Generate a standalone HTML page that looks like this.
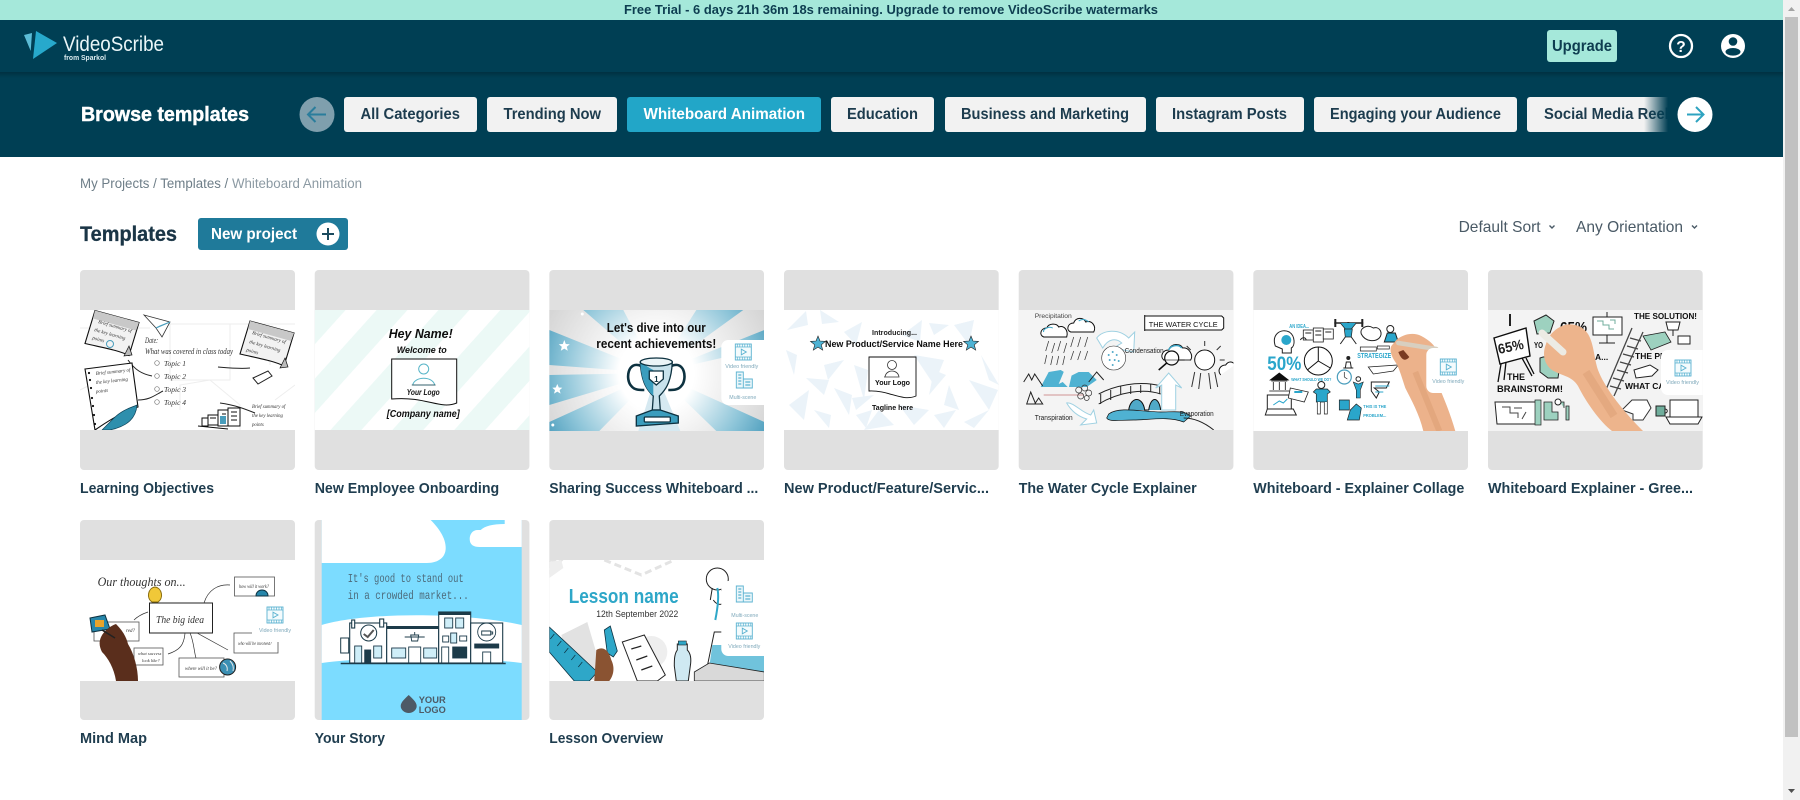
<!DOCTYPE html>
<html lang="en">
<head>
<meta charset="utf-8">
<title>VideoScribe - Templates</title>
<style>
html,body{margin:0;padding:0;background:#fff;width:1800px;height:800px;overflow:hidden}
svg.page{display:block}
text{font-family:"Liberation Sans",sans-serif}
.b{font-weight:700}
.ttl{font-weight:700;font-size:15px;fill:#1f3d4f}
.chip{font-weight:700;font-size:15.5px;fill:#1d3c4e}
.hw{font-family:"Liberation Serif",serif;font-style:italic;fill:#333}
.ln{fill:none;stroke:#222;stroke-width:1}
.tl{fill:none;stroke:#1c3a4a;stroke-width:.9}
.t{fill:#2ba6cb;font-weight:700}
.pl{font-size:5px;fill:#7fa9bb}
</style>
</head>
<body>
<svg class="page" xmlns="http://www.w3.org/2000/svg" width="1800" height="800" viewBox="0 0 1800 800">
<defs>
<linearGradient id="fade" x1="0" x2="1" y1="0" y2="0"><stop offset="0" stop-color="#003f54" stop-opacity="0"/><stop offset="1" stop-color="#003f54"/></linearGradient>
<linearGradient id="sh" x1="0" x2="0" y1="0" y2="1"><stop offset="0" stop-color="#000" stop-opacity=".22"/><stop offset="1" stop-color="#000" stop-opacity="0"/></linearGradient>
<clipPath id="chipclip"><rect x="1527" y="97" width="141" height="35"/></clipPath>
<filter id="s" x="-2%" y="-2%" width="104%" height="104%"><feGaussianBlur stdDeviation=".3"/></filter>
<pattern id="stripes" width="46" height="46" patternUnits="userSpaceOnUse" patternTransform="rotate(42)"><rect width="46" height="46" fill="#fff"/><rect width="23" height="46" fill="#ecf9f6"/></pattern>
<radialGradient id="burst" gradientUnits="userSpaceOnUse" cx="107" cy="63" r="125"><stop offset=".3" stop-color="#fff"/><stop offset="1" stop-color="#d4d4d4"/></radialGradient>
<radialGradient id="ray" gradientUnits="userSpaceOnUse" cx="107" cy="63" r="125"><stop offset=".3" stop-color="#fff"/><stop offset=".75" stop-color="#8cc4d8"/><stop offset="1" stop-color="#4f9fbe"/></radialGradient>
<g id="film"><rect x="0" y="0" width="16" height="16" fill="#f4fbfd" stroke="#5cb3d1" stroke-width=".9"/><path d="M0 3h16M0 13h16M2 0v3M4.500 0v3M7 0v3M9.500 0v3M12 0v3M14.500 0v3M2 13v3M4.500 13v3M7 13v3M9.500 13v3M12 13v3M14.500 13v3" stroke="#5cb3d1" stroke-width=".7" fill="none"/><path d="M6 5.200l5 2.800-5 2.800z" fill="none" stroke="#5cb3d1" stroke-width=".9"/></g>
<g id="bldg"><path d="M0 0h7v16H0zM7 7h9v9H7z" fill="#eaf6fa" stroke="#5cb3d1" stroke-width=".9"/><path d="M2 3h3M2 6h3M2 9h3M2 12h3M9 10h5M9 13h5" stroke="#5cb3d1" stroke-width="1.200"/></g>
<g id="note"><path d="M0 0L44 12 34 45C24 40 12 38 -10 33Z" fill="#f2f2f2" stroke="#111" stroke-width="1.100"/><path d="M0 0L44 12 41 20 -2 8Z" fill="#c8c8c8"/></g>
</defs>

<rect width="1800" height="800" fill="#fff"/>

<!-- top trial banner -->
<rect width="1783" height="20" fill="#a5e8da"/>
<text x="624" y="14" font-size="13" class="b" fill="#0d3d50" textLength="534" lengthAdjust="spacingAndGlyphs">Free Trial - 6 days 21h 36m 18s remaining. Upgrade to remove VideoScribe watermarks</text>

<!-- nav -->
<rect y="20" width="1783" height="137" fill="#003f54"/>
<rect y="72" width="1783" height="6" fill="url(#sh)"/>
<polygon points="24,35 32,33 30.700,51" fill="#5cbcd6"/>
<polygon points="36,31 57,43 33,59" fill="#27a9cc"/>
<text x="63" y="51" font-size="21.500" fill="#eaf6f8" textLength="101" lengthAdjust="spacingAndGlyphs">VideoScribe</text>
<text x="64" y="60" font-size="7" fill="#dcecf0" class="b" textLength="42" lengthAdjust="spacingAndGlyphs">from Sparkol</text>
<rect x="1547" y="30" width="70" height="32" rx="3" fill="#a5e8da"/>
<text x="1552" y="51" font-size="15.500" class="b" fill="#0e3d50" textLength="60" lengthAdjust="spacingAndGlyphs">Upgrade</text>
<circle cx="1681" cy="46" r="11" fill="none" stroke="#fff" stroke-width="2.300"/>
<text x="1681" y="52" font-size="15.500" class="b" fill="#fff" text-anchor="middle">?</text>
<circle cx="1733" cy="46" r="12" fill="#fff"/>
<circle cx="1733" cy="41.500" r="4.300" fill="#003f54"/>
<ellipse cx="1733" cy="51.800" rx="7.500" ry="3.800" fill="#003f54"/>

<!-- browse row -->
<text x="81" y="121" font-size="20.500" class="b" fill="#fff" stroke="#fff" stroke-width=".45" textLength="168" lengthAdjust="spacingAndGlyphs">Browse templates</text>
<circle cx="317" cy="114.500" r="17.500" fill="#7f9fad"/>
<path d="M326 114.500H308M315.500 107L308 114.500l7.500 7.500" fill="none" stroke="#2a7d9c" stroke-width="2"/>
<rect x="344" y="97" width="133" height="35" rx="3" fill="#f2f2f2"/>
<text x="360.500" y="119" class="chip" textLength="99.500" lengthAdjust="spacingAndGlyphs">All Categories</text>
<rect x="487" y="97" width="130" height="35" rx="3" fill="#f2f2f2"/>
<text x="503.500" y="119" class="chip" textLength="97.500" lengthAdjust="spacingAndGlyphs">Trending Now</text>
<rect x="627" y="97" width="194" height="35" rx="3" fill="#22a6c8"/>
<text x="643.500" y="119" class="chip" style="fill:#fff" textLength="161.500" lengthAdjust="spacingAndGlyphs">Whiteboard Animation</text>
<rect x="831" y="97" width="103" height="35" rx="3" fill="#f2f2f2"/>
<text x="847" y="119" class="chip" textLength="71" lengthAdjust="spacingAndGlyphs">Education</text>
<rect x="945" y="97" width="201" height="35" rx="3" fill="#f2f2f2"/>
<text x="961" y="119" class="chip" textLength="168" lengthAdjust="spacingAndGlyphs">Business and Marketing</text>
<rect x="1156" y="97" width="148" height="35" rx="3" fill="#f2f2f2"/>
<text x="1172" y="119" class="chip" textLength="115" lengthAdjust="spacingAndGlyphs">Instagram Posts</text>
<rect x="1314" y="97" width="203" height="35" rx="3" fill="#f2f2f2"/>
<text x="1330" y="119" class="chip" textLength="171" lengthAdjust="spacingAndGlyphs">Engaging your Audience</text>
<g clip-path="url(#chipclip)">
<rect x="1527" y="97" width="160" height="35" rx="3" fill="#f2f2f2"/>
<text x="1544" y="119" class="chip" textLength="133" lengthAdjust="spacingAndGlyphs">Social Media Reels</text>
<rect x="1644" y="97" width="24" height="35" fill="url(#fade)"/>
</g>
<circle cx="1695" cy="114.500" r="17.500" fill="#fff"/>
<path d="M1687 114.500H1703M1696 107l7.500 7.500-7.500 7.500" fill="none" stroke="#2ea3c0" stroke-width="2"/>

<!-- breadcrumb -->
<text x="80" y="188" font-size="13.500" fill="#6e7e88" textLength="282" lengthAdjust="spacingAndGlyphs">My Projects / Templates / <tspan fill="#8c9aa3">Whiteboard Animation</tspan></text>

<!-- heading -->
<text x="80" y="241" font-size="21" class="b" fill="#1a3546" stroke="#1a3546" stroke-width=".3" textLength="97" lengthAdjust="spacingAndGlyphs">Templates</text>
<rect x="198" y="218" width="150" height="32" rx="3" fill="#1f7a9a"/>
<text x="211" y="239" font-size="15.500" class="b" fill="#fff" textLength="86" lengthAdjust="spacingAndGlyphs">New project</text>
<circle cx="328" cy="234" r="11.500" fill="#fff"/>
<path d="M328 228v12M322 234h12" stroke="#1a4a5e" stroke-width="2"/>

<text x="1458.600" y="232" font-size="16" fill="#4a5a66" textLength="82" lengthAdjust="spacingAndGlyphs">Default Sort</text>
<path d="M1549.500 225.500l2.500 2.500 2.500-2.500" fill="none" stroke="#4a5a66" stroke-width="1.400"/>
<text x="1576" y="232" font-size="16" fill="#4a5a66" textLength="107" lengthAdjust="spacingAndGlyphs">Any Orientation</text>
<path d="M1692 225.500l2.500 2.500 2.500-2.500" fill="none" stroke="#4a5a66" stroke-width="1.400"/>

<!-- card backgrounds -->
<g fill="#e0e0e0">
<rect x="80" y="270" width="215" height="200" rx="4"/>
<rect x="314.700" y="270" width="214.700" height="200" rx="4"/>
<rect x="549.300" y="270" width="214.700" height="200" rx="4"/>
<rect x="784" y="270" width="214.700" height="200" rx="4"/>
<rect x="1018.700" y="270" width="214.700" height="200" rx="4"/>
<rect x="1253.300" y="270" width="214.700" height="200" rx="4"/>
<rect x="1488" y="270" width="214.700" height="200" rx="4"/>
<rect x="80" y="520" width="215" height="200" rx="4"/>
<rect x="314.700" y="520" width="214.700" height="200" rx="4"/>
<rect x="549.300" y="520" width="214.700" height="200" rx="4"/>
</g>

<!-- T1 Learning Objectives -->
<svg x="80" y="310" width="215" height="120" viewBox="0 0 215 120"><g filter="url(#s)">
<rect width="215" height="120" fill="#fff"/>
<g fill="none" stroke="#eee" stroke-width="1"><path d="M0 18H70M90 14H215M90 14V70H150V14M0 80L40 60M100 100V75L130 70 160 95V120M20 100V120M35 95V120M170 15l20 10v30M195 90l20-15"/></g>
<use href="#note" x="15" y=".5"/>
<use href="#note" x="170" y="11"/>
<path d="M44 46l5-10 3 9z" fill="#bbb" stroke="#111" stroke-width=".7"/>
<path d="M200 58l5-10 3 9z" fill="#bbb" stroke="#111" stroke-width=".7"/>
<g class="hw" font-size="5"><text transform="translate(18,13) rotate(16)" class="hw">Brief summary of</text><text transform="translate(14,21) rotate(16)" class="hw">the key learning</text><text transform="translate(12,29) rotate(16)" class="hw">points</text>
<text transform="translate(172,24) rotate(16)" class="hw">Brief summary of</text><text transform="translate(169,33) rotate(16)" class="hw">the key learning</text><text transform="translate(166,41) rotate(16)" class="hw">points</text></g>
<circle cx="30" cy="34" r="3.500" fill="none" stroke="#4a9dbc"/>
<path d="M64 5L90 12 82 27 76 18z" fill="#fff" stroke="#333" stroke-width=".8"/><path d="M76 18L90 12 80 16z" fill="#4a9dbc" stroke="#4a9dbc"/>
<text x="65" y="33" class="hw" font-size="8" textLength="13" lengthAdjust="spacingAndGlyphs">Date:</text>
<text x="65" y="44" class="hw" font-size="8" textLength="88" lengthAdjust="spacingAndGlyphs">What was covered in class today</text>
<g class="hw" font-size="7.500"><text x="84" y="56" class="hw">Topic 1</text><text x="84" y="69" class="hw">Topic 2</text><text x="84" y="82" class="hw">Topic 3</text><text x="84" y="95" class="hw">Topic 4</text></g>
<g fill="none" stroke="#777" stroke-width=".7"><circle cx="77" cy="53" r="2.300"/><circle cx="77" cy="66" r="2.300"/><circle cx="77" cy="79" r="2.300"/><circle cx="77" cy="92" r="2.300"/></g>
<path d="M48 50C55 60 62 64 72 66" class="ln" stroke-width=".7"/>
<path d="M58 90C70 90 75 85 83 81" class="ln" stroke-width=".7"/>
<path d="M170 58C160 59 150 58 138 57" class="ln" stroke-width=".7"/>
<path d="M175 103C165 99 155 95 140 93" class="ln" stroke-width=".7"/>
<path d="M5 59L52 53 58 97C48 100 35 106 15 120Z" fill="#fff" stroke="#111" stroke-width="1.100"/>
<g fill="#111"><circle cx="9" cy="63" r="1.100"/><circle cx="10" cy="70" r="1.100"/><circle cx="11" cy="78" r="1.100"/><circle cx="12" cy="88" r="1.100"/><circle cx="13" cy="96" r="1.100"/><circle cx="14" cy="105" r="1.100"/><circle cx="15" cy="114" r="1.100"/></g>
<text transform="translate(16,65) rotate(-6)" class="hw" font-size="5">Brief summary of</text><text transform="translate(16,74) rotate(-6)" class="hw" font-size="5">the key learning</text><text transform="translate(16,83) rotate(-6)" class="hw" font-size="5">points</text>
<path d="M34 108C42 100 50 98 57 95 56 108 48 116 30 120H22C26 116 30 112 34 108Z" fill="#2e8fad" stroke="#0f4257" stroke-width=".7"/>
<path d="M173 68l15-7 4 5-14 8z" fill="#fff" stroke="#222"/>
<g fill="#fff" stroke="#111"><rect x="128" y="105" width="10" height="10"/><rect x="138" y="100" width="10" height="16"/><rect x="148" y="98" width="12" height="18"/></g>
<path d="M122 108h6v8h-6zM130 108h6M142 104h4M142 108h4M151 102h6M151 106h6M151 110h6M118 116l30 3" stroke="#111" fill="none"/>
<rect x="140" y="106" width="6" height="8" fill="#4a9dbc"/>
<g class="hw" font-size="4.800"><text x="172" y="98" class="hw">Brief summary of</text><text x="172" y="107" class="hw">the key learning</text><text x="172" y="116" class="hw">points</text></g>
</g></svg>

<!-- T2 New Employee Onboarding -->
<svg x="314.700" y="310" width="214.700" height="120" viewBox="0 0 214.700 120"><g filter="url(#s)">
<rect width="215" height="120" fill="url(#stripes)"/>
<text x="74" y="28" font-size="13" class="b" font-style="italic" fill="#111" textLength="64" lengthAdjust="spacingAndGlyphs">Hey Name!</text>
<text x="82" y="43" font-size="9.500" class="b" font-style="italic" fill="#111" textLength="50" lengthAdjust="spacingAndGlyphs">Welcome to</text>
<path d="M77 49H142V93C125 100 112 86 77 89Z" fill="#fff" stroke="#111" stroke-width="1"/>
<circle cx="109" cy="59" r="5" fill="none" stroke="#58b5c8"/>
<path d="M98 75C100 66 118 66 120 75Z" fill="none" stroke="#58b5c8"/><path d="M97 75h24" stroke="#111" stroke-width=".6"/>
<text x="92" y="85" font-size="8.500" class="b" font-style="italic" fill="#111" textLength="33" lengthAdjust="spacingAndGlyphs">Your Logo</text>
<text x="72" y="107" font-size="10.500" class="b" font-style="italic" fill="#111" textLength="73" lengthAdjust="spacingAndGlyphs">[Company name]</text>
</g></svg>

<!-- T3 Sharing Success -->
<svg x="549.300" y="310" width="214.700" height="121" viewBox="0 0 214.700 121"><g filter="url(#s)">
<rect width="215" height="121" fill="url(#burst)"/>
<g fill="url(#ray)">
<polygon points="34,0 74,0 107,63"/><polygon points="147,0 194,0 107,63"/>
<polygon points="0,20 0,55 107,63"/><polygon points="0,65 0,95 107,63"/>
<polygon points="0,112 0,121 50,121 107,63"/>
<polygon points="167,121 215,121 215,112 107,63"/>
<polygon points="215,20 215,38 107,63"/>
</g>
<polygon points="89,121 131,121 107,63" fill="#d6e9f1"/>
<g fill="#fff"><path d="M15 30l1.500 4 4 .3-3 2.500 1 4-3.500-2.200-3.500 2.200 1-4-3-2.500 4-.3z"/><path d="M8 74l1.500 3.500 3.500.3-2.700 2.300 1 3.500-3.300-2-3.300 2 1-3.500-2.700-2.300 3.500-.3z"/><circle cx="3.500" cy="115" r="1.500"/><circle cx="33" cy="4" r="1.500"/></g>
<text x="57.500" y="22" font-size="12.500" class="b" fill="#111" textLength="99" lengthAdjust="spacingAndGlyphs">Let's dive into our</text>
<text x="47" y="38" font-size="12.500" class="b" fill="#111" textLength="120" lengthAdjust="spacingAndGlyphs">recent achievements!</text>
<g stroke="#0d3040" stroke-width="1.300">
<path d="M92 56C78 50 76 70 82 76 85 80 90 80 95 80" fill="none" stroke-width="2.600"/>
<path d="M122 56C136 50 138 70 132 76 129 80 124 80 119 80" fill="none" stroke-width="2.600"/>
<path d="M91 52C92 75 100 82 104 86L103 100H111L110 86C114 82 122 75 123 52Z" fill="#c8e2ec"/>
<path d="M91 52C92 75 100 82 104 86V60C100 58 96 55 91 52Z" fill="#3b9dbd" stroke="none"/>
<ellipse cx="107" cy="52" rx="16" ry="4" fill="#eaf4f7"/>
<path d="M100 61h14v8l-7 6-7-6z" fill="#fff"/>
<path d="M87 106L103 100H111L129 106V113L87 116Z" fill="#3b9dbd"/>
<rect x="95" y="107" width="26" height="5" rx="1" fill="#fff"/>
</g>
<text x="104.800" y="72" font-size="8" class="b" fill="#0d3040">1</text>
<rect x="172" y="30" width="50" height="65" rx="7" fill="#fff"/>
<use href="#film" x="186" y="34"/>
<text x="176" y="58" class="pl" textLength="33" lengthAdjust="spacingAndGlyphs">Video friendly</text>
<use href="#bldg" x="187" y="62"/>
<text x="180" y="89" class="pl" textLength="27" lengthAdjust="spacingAndGlyphs">Multi-scene</text>
</g></svg>

<!-- T4 New Product -->
<svg x="784" y="310" width="214.700" height="120" viewBox="0 0 214.700 120"><g filter="url(#s)">
<rect width="215" height="120" fill="#fff"/>
<g fill="#ebf3f9">
<polygon points="3,20 22,1 24,15"/><polygon points="36,0 55,12 38,14"/><polygon points="60,22 78,12 72,35"/><polygon points="118,25 138,10 136,32"/>
<polygon points="2,40 10,65 13,45"/><polygon points="40,55 60,50 44,70"/><polygon points="70,55 80,90 84,60"/><polygon points="22,68 45,70 40,85"/>
<polygon points="50,78 65,105 68,85"/><polygon points="5,95 25,80 20,110"/><polygon points="68,88 90,85 72,100"/><polygon points="30,100 47,105 45,118"/>
<polygon points="72,105 82,118 88,100"/><polygon points="150,60 162,65 145,85"/><polygon points="165,75 175,100 160,95"/><polygon points="197,45 215,75 205,70"/>
<polygon points="185,70 214,80 205,100"/><polygon points="130,45 160,50 150,75"/><polygon points="180,112 205,100 190,118"/><polygon points="150,105 172,100 160,118"/>
<polygon points="115,95 145,100 130,115"/><polygon points="95,100 110,115 80,120"/><polygon points="170,15 190,10 185,35"/><polygon points="145,13 165,15 150,25"/>
</g>
<text x="88" y="25" font-size="7.500" class="b" fill="#222" textLength="45" lengthAdjust="spacingAndGlyphs">Introducing...</text>
<text x="41" y="37" font-size="9" class="b" fill="#111" textLength="138" lengthAdjust="spacingAndGlyphs">New Product/Service Name Here</text>
<g fill="#4fb3d4" stroke="#222" stroke-width=".6"><path d="M34 26l2 5 5.500.4-4.200 3.400 1.400 5.300-4.700-3-4.700 3 1.400-5.300-4.200-3.400 5.500-.4z"/><path d="M187 26l2 5 5.500.4-4.200 3.400 1.400 5.300-4.700-3-4.700 3 1.400-5.300-4.200-3.400 5.500-.4z"/></g>
<path d="M85 47H132V86C118 92 105 80 85 81Z" fill="#fff" stroke="#111" stroke-width=".9"/>
<circle cx="108" cy="55" r="4.500" fill="none" stroke="#333" stroke-width=".8"/>
<path d="M101 67C102 59 114 59 115 67H100" fill="none" stroke="#333" stroke-width=".8"/>
<text x="91" y="75" font-size="7.500" class="b" fill="#111" textLength="35" lengthAdjust="spacingAndGlyphs">Your Logo</text>
<text x="88" y="100" font-size="7.500" class="b" fill="#111" textLength="41" lengthAdjust="spacingAndGlyphs">Tagline here</text>
</g></svg>

<!-- T5 Water Cycle -->
<svg x="1018.700" y="310" width="214.700" height="120" viewBox="0 0 214.700 120"><g filter="url(#s)">
<rect width="215" height="120" fill="#f4f4f4"/>
<text x="16" y="8" font-size="6.500" fill="#444" textLength="37" lengthAdjust="spacingAndGlyphs">Precipitation</text>
<path d="M126 6h77l2 2v10l-2 2h-77" fill="#fff" stroke="#111"/><path d="M126 5v16" stroke="#111"/>
<text x="130" y="17" font-size="7.500" fill="#111" textLength="69" lengthAdjust="spacingAndGlyphs">THE WATER CYCLE</text>
<path d="M25 27C20 25 22 18 28 18 30 13 38 13 40 17 45 15 50 20 48 27Z" fill="#fff" stroke="#111"/><path d="M25 22C24 19 30 16 34 18" stroke="#3aa5c6" fill="none"/>
<path d="M52 22C47 20 49 13 55 13 57 7 65 7 67 12 73 10 78 16 75 22Z" fill="#fff" stroke="#111"/><path d="M60 11C64 8 68 10 70 12" stroke="#3aa5c6" fill="none"/>
<path d="M30 31l-3 10M36 33l-3 10M42 31l-3 10M48 33l-3 10M28 45l-2 9M34 46l-2 9M40 46l-2 9M46 46l-2 9M55 27l-3 10M62 27l-3 10M69 27l-3 10M55 41l-3 9M62 41l-3 9M69 41l-3 9" stroke="#333" stroke-width=".7"/>
<path d="M22 77L30 62 42 60 52 66 60 62 70 62 78 70 68 77Z" fill="#50b2d2"/>
<path d="M50 50l6 2-6 26-6-6-4 2z" fill="#f4f4f4"/>
<path d="M5 72l5-8 3 6 3-6 8 12M70 72l8-10 7 8" class="ln"/>
<path d="M12 82l5 12h-9zM20 88l4 6h-8z" class="ln"/><path d="M25 85h40" stroke="#a33" stroke-width=".5"/>
<g fill="none" stroke="#333" stroke-width=".7"><circle cx="60" cy="80" r="3"/><circle cx="66" cy="78" r="3"/><circle cx="70" cy="83" r="3"/><circle cx="62" cy="86" r="3"/><circle cx="68" cy="88" r="2.500"/></g>
<path d="M78 28C84 20 100 18 110 28L116 22 115 42 95 38 103 33C98 28 90 28 84 38Z" fill="#fff" stroke="#9fd1e2"/>
<circle cx="95" cy="48" r="12" fill="#fff" stroke="#333" stroke-width=".6"/>
<g fill="#50a9c8"><circle cx="90" cy="45" r="1"/><circle cx="94" cy="42" r="1"/><circle cx="98" cy="45" r="1"/><circle cx="91" cy="50" r="1"/><circle cx="96" cy="50" r="1"/><circle cx="100" cy="51" r="1"/><circle cx="94" cy="55" r="1"/></g>
<text x="106" y="43" font-size="7" fill="#222" textLength="39" lengthAdjust="spacingAndGlyphs">Condensation</text>
<path d="M145 50C141 46 144 40 150 40 152 33 162 33 164 38 170 37 175 45 172 50Z" fill="#fff" stroke="#111"/><path d="M150 40C152 35 160 34 163 38" stroke="#3aa5c6" fill="none" stroke-width="1.500"/>
<circle cx="153" cy="48" r="7" fill="#fff" fill-opacity=".4" stroke="#111" stroke-width="1.200"/><path d="M148 53l-8 7" stroke="#111" stroke-width="1.500"/>
<circle cx="186" cy="50" r="10" fill="#fff" stroke="#111"/>
<path d="M186 36v-5M198 40l4-4M172 40l-4-4M201 50h5M171 50h-5M176 62l-3 15M182 63l-2 16M190 63l2 16M196 62l3 15" stroke="#333"/>
<path d="M202 65C198 60 202 55 207 55 210 50 215 52 216 55" fill="#fff" stroke="#111"/>
<path d="M82 94V84M92 90V80M102 84V76M112 84V76M122 83V75M132 82V74M141 84V76M80 84C95 76 120 70 142 76M80 94C100 82 125 78 142 84" class="ln"/>
<path d="M110 100C112 86 124 86 126 100H130C132 86 140 86 142 100" fill="#50a9c8" stroke="#111"/>
<path d="M90 104C100 96 125 102 142 102 155 102 165 100 172 106L165 112C150 106 130 110 115 110 100 110 90 112 88 108Z" fill="#50b2d2" stroke="#111" stroke-width=".7"/>
<path d="M143 100V75L137 78 150 63 163 78 157 75V100Z" fill="#fff" stroke="#9fd1e2"/>
<path d="M48 93C55 92 62 102 72 105L75 100 78 113 62 115 68 109C58 106 52 100 48 93Z" fill="#fff" stroke="#9fd1e2"/>
<text x="161" y="106" font-size="7" fill="#222" textLength="34" lengthAdjust="spacingAndGlyphs">Evaporation</text>
<text x="16" y="110" font-size="7" fill="#222" textLength="38" lengthAdjust="spacingAndGlyphs">Transpiration</text>
<path d="M165 108C175 108 185 112 195 120" class="ln"/>
</g></svg>

<!-- T6 Explainer Collage -->
<svg x="1253.300" y="310" width="214.700" height="121" viewBox="0 0 214.700 121"><g filter="url(#s)">
<rect width="215" height="121" fill="#fff"/>
<path d="M22 36C18 24 28 18 36 22 42 26 42 36 38 38V43H29V39Z" fill="#fff" stroke="#222"/><circle cx="33" cy="30" r="5" fill="#2ba6cb"/>
<text x="36" y="18" font-size="5.500" class="t" textLength="20" lengthAdjust="spacingAndGlyphs">AN IDEA...</text>
<g fill="#fff" stroke="#222" stroke-width=".8"><rect x="50" y="20" width="10" height="10"/><rect x="60" y="18" width="10" height="14"/><rect x="70" y="19" width="10" height="10"/></g><path d="M52 23h6M62 21h6M62 25h6M72 22h6M47 30c2-3 5-3 6 0" stroke="#222" fill="none"/>
<path d="M81 13h29" stroke="#222" stroke-width="1.500"/><path d="M82 9v8M109 9v8" stroke="#222" stroke-width="2"/>
<circle cx="95" cy="15" r="2.500" fill="#fff" stroke="#222"/><path d="M87 13l5 6h6l5-6M91 19h8l-1 8h-6z" fill="#2ba6cb" stroke="#222" stroke-width=".7"/><path d="M92 27l-5 7M98 27l5 7" stroke="#222"/>
<path d="M108 24C106 18 114 14 120 18 127 16 130 24 126 28 122 32 112 32 108 24Z" fill="#fff" stroke="#222"/>
<circle cx="137" cy="19" r="3.500" fill="#fff" stroke="#222"/><path d="M131 32l3-9h8l3 9z" fill="#2ba6cb" stroke="#222"/>
<text x="14" y="60" font-size="19" class="t" textLength="34" lengthAdjust="spacingAndGlyphs">50%</text>
<circle cx="65" cy="51" r="14" fill="#fff" stroke="#111"/><path d="M65 37V51L77 58M65 51L54 60" stroke="#111" fill="none"/>
<path d="M90 58h10M92 58l1-6h4l1 6" stroke="#222" fill="none"/><circle cx="95" cy="48" r="2" fill="#222"/>
<text x="104" y="48" font-size="7" class="t" textLength="34" lengthAdjust="spacingAndGlyphs">STRATEGIZE</text>
<path d="M107 37h16v4h-16zM124 36h12v3h-12z" fill="#fff" stroke="#222" stroke-width=".7"/>
<circle cx="91" cy="67" r="7" fill="#fff" stroke="#4a9dbc" stroke-width="1.200"/><path d="M91 62v5l3 2" stroke="#222" fill="none" stroke-width=".7"/>
<path d="M115 57l30-2-5 6-20 3z" fill="#fff" stroke="#222" stroke-width=".8"/>
<path d="M118 72h18l-3 6h-12l5 4-3 6-5-7z" fill="#fff" stroke="#222"/><path d="M122 76h14M122 82h8" stroke="#2ba6cb"/>
<text x="38" y="71" font-size="4.500" class="t" textLength="40" lengthAdjust="spacingAndGlyphs">WHAT SHOULD WE DO?</text>
<path d="M17 70l9-7 9 7zM18 71h16M20 72v8M26 72v8M32 72v8M16 81h20" fill="#111" stroke="#111" stroke-width=".8"/>
<path d="M14 85h24v14H14zM14 99H40l3 6H12z" fill="#fff" stroke="#222"/><path d="M20 95l6-4 4 2 4-4" stroke="#2ba6cb" fill="none"/>
<path d="M37 78l18 4-4 10-16-4z" fill="#fff" stroke="#222" stroke-width=".8"/><path d="M41 82h8" stroke="#2ba6cb" stroke-width="2"/>
<circle cx="68" cy="75" r="3.500" fill="#fff" stroke="#222"/><path d="M60 82l3-3h11l3 3-3 2v8H63v-8z" fill="#2ba6cb" stroke="#222" stroke-width=".7"/><path d="M64 92v12h3V92M71 92v12h3V92" fill="#fff" stroke="#222" stroke-width=".7"/>
<circle cx="105" cy="69" r="2.300" fill="#fff" stroke="#222"/><path d="M100 72l5 2 5-2-3 8v8h-4v-8z" fill="#2ba6cb" stroke="#222" stroke-width=".6"/>
<text x="110" y="98" font-size="4.500" class="t" textLength="23" lengthAdjust="spacingAndGlyphs">THIS IS THE</text>
<text x="110" y="107" font-size="4.500" class="t" textLength="23" lengthAdjust="spacingAndGlyphs">PROBLEM...</text>
<path d="M86 90h10v10H86zM97 100l6-6 5 4-2 12H94z" fill="#2ba6cb" stroke="#222" stroke-width=".7"/>
<path d="M143 30C150 24 160 22 168 26 176 30 182 36 183 40L174 52C186 76 196 100 202 121H170C166 104 158 90 152 78 148 66 146 58 142 52 138 46 136 40 138 36Z" fill="#ecb28b"/>
<path d="M145 42C148 50 152 52 156 47L150 40Z" fill="#7a3a20"/>
<path d="M145 33L183 39" stroke="#d8cfc0" stroke-width="4.500" stroke-linecap="round"/>
<path d="M162 62L186 121" stroke="#d99a70" stroke-width="6" opacity=".45"/>
<rect x="173" y="38" width="50" height="45" rx="7" fill="#fff"/>
<use href="#film" x="187" y="49"/>
<text x="179" y="73" class="pl" textLength="32" lengthAdjust="spacingAndGlyphs">Video friendly</text>
</g></svg>

<!-- T7 Green explainer -->
<svg x="1488" y="310" width="214.700" height="121" viewBox="0 0 214.700 121"><g filter="url(#s)">
<rect width="215" height="121" fill="#f3f3f3"/>
<path d="M22 4v12" stroke="#222" stroke-width="2"/>
<path d="M6 28L38 18 42 46 12 54Z" fill="#fff" stroke="#111" stroke-width="1.400"/>
<text x="11" y="44" font-size="14" class="b" fill="#222" transform="rotate(-12 11 44)" textLength="26" lengthAdjust="spacingAndGlyphs">65%</text>
<path d="M13 54l-3 18M18 52l-2 18M34 48l10 18M38 48l8 16" stroke="#111" stroke-width="1.300"/>
<path d="M46 11l12-6 8 6-4 12-13 1z" fill="#9dd1bf" stroke="#222"/>
<text x="72" y="22" font-size="15" class="b" fill="#111" textLength="27" lengthAdjust="spacingAndGlyphs">65%</text>
<text x="46" y="38" font-size="8.500" class="b" fill="#111" textLength="9" lengthAdjust="spacingAndGlyphs">YO</text>
<path d="M105 7h29v18h-29zM119 2v5M119 25v8M111 33h16" fill="#fff" stroke="#222"/>
<path d="M109 11h6v4h6v4h5M122 10h5v4" stroke="#6fae9c" fill="none"/>
<text x="146" y="9" font-size="8.500" class="b" fill="#111" textLength="63" lengthAdjust="spacingAndGlyphs">THE SOLUTION!</text>
<path d="M144 18L117 82M155 22L126 86M142 28l11 3M139 36l11 3M135 44l11 3M132 52l11 3M129 60l11 3M125 68l11 3M122 76l11 3" stroke="#444" stroke-width="1.300" fill="none"/>
<path d="M155 26l22-4 6 10-20 8z" fill="#9dd1bf" stroke="#222" stroke-width=".8"/><path d="M178 12h14l-2 8h-10zM185 20v6" fill="#fff" stroke="#222"/><path d="M190 26h12v8h-12z" fill="#fff" stroke="#222"/>
<text x="147" y="49" font-size="8.500" class="b" fill="#111">THE PR</text>
<path d="M146 60l16-5 8 5-6 6-16 2z" fill="#fff" stroke="#222"/>
<text x="137" y="79" font-size="8.500" class="b" fill="#111">WHAT CA</text>
<text x="107" y="50" font-size="8.500" class="b" fill="#111">A...</text>
<path d="M52 48C60 45 68 48 72 54L70 68H60L52 62Z" fill="#9dd1bf" stroke="#222"/>
<text x="19" y="70" font-size="9" class="b" fill="#111" textLength="18" lengthAdjust="spacingAndGlyphs">THE</text>
<text x="9" y="82" font-size="9" class="b" fill="#111" textLength="66" lengthAdjust="spacingAndGlyphs">BRAINSTORM!</text>
<path d="M7 92h42l3 22H9z" fill="#fff" stroke="#222"/><rect x="47" y="90" width="6" height="25" fill="#9dd1bf" stroke="#222" stroke-width=".7"/>
<path d="M14 97h8v6h8v5M26 98h8M38 102l-4 7" stroke="#444" fill="none"/>
<path d="M56 92h8v10h6v8H56zM72 92h4v6M78 96v14h3V96z" fill="#9dd1bf" stroke="#222" stroke-width=".8"/><circle cx="70" cy="92" r="3" fill="#fff" stroke="#222"/>
<path d="M134 100l10-10 15 0 4 8-8 12h-10v-6z" fill="#fff" stroke="#333"/>
<path d="M168 96h9v10h-9z" fill="#6fae9c" stroke="#222"/><path d="M177 99c3 0 3 4 0 4" fill="none" stroke="#222"/>
<path d="M182 90h28v17h-28zM178 107h36l-4 7h-28z" fill="#fff" stroke="#222"/>
<path d="M72 17C80 12 94 14 100 24 106 34 106 48 110 60 116 76 132 98 155 121H124C112 112 98 92 90 76 84 66 74 66 64 60 56 54 54 44 58 34 60 26 66 20 72 17Z" fill="#edb48c"/>
<path d="M54 23L75 42" stroke="#ecebe4" stroke-width="7" stroke-linecap="round"/>
<path d="M98 62L126 106" stroke="#d99a70" stroke-width="8" opacity=".4"/>
<rect x="173" y="40" width="50" height="45" rx="7" fill="#fff"/>
<use href="#film" x="187" y="50"/>
<text x="178" y="74" class="pl" textLength="33" lengthAdjust="spacingAndGlyphs">Video friendly</text>
</g></svg>

<!-- T8 Mind Map -->
<svg x="80" y="560" width="215" height="121" viewBox="0 0 215 121"><g filter="url(#s)">
<rect width="215" height="121" fill="#fff"/>
<text x="17.600" y="26" class="hw" font-size="13" fill="#111" textLength="88" lengthAdjust="spacingAndGlyphs">Our thoughts on...</text>
<rect x="69.500" y="43" width="63" height="30" fill="#fff" stroke="#222"/>
<text x="76" y="63" class="hw" font-size="10.500" fill="#111" textLength="48" lengthAdjust="spacingAndGlyphs">The big idea</text>
<rect x="154.500" y="17" width="40" height="19" fill="#fff" stroke="#555" stroke-width=".8"/>
<text x="159" y="28" class="hw" font-size="5" textLength="30" lengthAdjust="spacingAndGlyphs">how will it work?</text>
<rect x="154" y="73" width="44" height="20" fill="#fff" stroke="#555" stroke-width=".8"/>
<text x="158" y="85" class="hw" font-size="5" textLength="34" lengthAdjust="spacingAndGlyphs">who will be involved?</text>
<rect x="99" y="98" width="45" height="19" fill="#fff" stroke="#555" stroke-width=".8"/>
<text x="105" y="110" class="hw" font-size="5" textLength="32" lengthAdjust="spacingAndGlyphs">where will it be?</text>
<rect x="54" y="88" width="29" height="17" fill="#fff" stroke="#555" stroke-width=".8"/>
<text x="58" y="95" class="hw" font-size="4.500">what success</text><text x="62" y="102" class="hw" font-size="4.500">look like?</text>
<rect x="14" y="62" width="45" height="19" fill="#fff" stroke="#555" stroke-width=".8"/>
<text x="46" y="72" class="hw" font-size="5">red?</text>
<path d="M124 43C128 30 138 24 150 25M117 73L148 90M105 73C104 85 100 90 88 94M110 73C114 82 114 92 116 98M68 52C62 54 58 56 54 60" fill="none" stroke="#333" stroke-width=".7"/>
<path d="M72 42C66 38 68 28 75 27 82 28 84 38 78 42Z" fill="#f0c838" stroke="#8a6d10"/>
<path d="M10 58l15-3 5 14-18 3z" fill="#2786aa" stroke="#0d3040"/><rect x="15" y="60" width="9" height="7" fill="#e8a32b"/>
<path d="M20 80C22 72 30 66 36 64 42 70 46 76 48 84 54 94 58 108 58 121H36C34 108 28 98 22 92 20 88 19 84 20 80Z" fill="#5a2e1c"/>
<path d="M22 70L35 78" stroke="#222" stroke-width="1.500"/>
<path d="M146 38C146 30 158 30 158 38Z" fill="#2786aa" stroke="#0d3040" transform="translate(30,-2)"/>
<circle cx="147.600" cy="107" r="8" fill="#3b8fb3" stroke="#222"/><path d="M143 103c3 1 5 4 4 8M150 101c3 3 4 6 3 10" stroke="#e8e8e8" fill="none"/>
<rect x="172" y="39" width="50" height="43" rx="7" fill="#fff"/>
<use href="#film" x="187" y="47"/>
<text x="179" y="72" class="pl" textLength="32" lengthAdjust="spacingAndGlyphs">Video friendly</text>
</g></svg>

<!-- T9 Your Story -->
<svg x="314.700" y="520" width="214.700" height="200" viewBox="0 0 214.700 200"><g filter="url(#s)">
<rect x="7" width="200" height="200" fill="#7bdcff"/>
<path d="M7 0H116C124 8 131 18 131 28 131 37 124 43 112 43H7Z" fill="#fff"/>
<path d="M207 0H190V4C178 4 170 6 166 10H163C158 10 155 14 155 19 155 25 159 27 165 27H207Z" fill="#fff"/>
<text x="33" y="62" font-size="12" fill="#4d6a7a" style="font-family:'Liberation Mono',monospace" textLength="116" lengthAdjust="spacingAndGlyphs">It's good to stand out</text>
<text x="33" y="79" font-size="12" fill="#4d6a7a" style="font-family:'Liberation Mono',monospace" textLength="121" lengthAdjust="spacingAndGlyphs">in a crowded market...</text>
<path d="M7 105C50 92 150 92 207 105V143C150 136 60 136 7 143Z" fill="#fff"/>
<g fill="#fff" stroke="#1c3a4a" stroke-width="1.100">
<rect x="35" y="103" width="37" height="40"/><rect x="37" y="100" width="3" height="8"/><rect x="65" y="99" width="4" height="8"/>
<rect x="72" y="107" width="52" height="36"/><rect x="124" y="92" width="32" height="51"/><rect x="156" y="103" width="32" height="40"/>
</g>
<rect x="72" y="106" width="52" height="3" fill="#1c3a4a"/><rect x="124" y="92" width="32" height="3" fill="#1c3a4a"/>
<circle cx="54" cy="113" r="8" fill="#fff" stroke="#1c3a4a"/><path d="M49 114l4 3 6-7" stroke="#555" stroke-width="2" fill="none"/>
<g class="tl"><rect x="40" y="126" width="7" height="17" fill="#cfeef8"/><rect x="50" y="130" width="6" height="13" fill="#1c3a4a"/><rect x="59" y="126" width="8" height="12" fill="#cfeef8"/>
<path d="M90 117h20M100 112v3M96 115h8l-1 6h-6z"/><rect x="77" y="128" width="14" height="10" fill="#cfeef8"/><rect x="94" y="127" width="12" height="16"/><rect x="109" y="128" width="13" height="10" fill="#cfeef8"/>
<rect x="130" y="98" width="8" height="10" fill="#cfeef8"/><rect x="141" y="98" width="8" height="10" fill="#cfeef8"/><rect x="128" y="116" width="6" height="6"/><rect x="136" y="113" width="6" height="10" fill="#cfeef8"/><rect x="145" y="116" width="7" height="5"/>
<rect x="127" y="127" width="7" height="16"/><rect x="138" y="127" width="14" height="11" fill="#1c3a4a"/>
<circle cx="172" cy="112" r="9"/><path d="M167 111h9v4h-9zM176 112h2v2h-2z"/><rect x="160" y="124" width="24" height="4" fill="#1c3a4a"/><rect x="168" y="132" width="8" height="11"/>
</g>
<text x="163" y="128" font-size="5.500" class="b" fill="#1c3a4a">CAFE</text>
<rect x="26" y="118" width="8" height="15" fill="#fff" stroke="#1c3a4a"/>
<path d="M26 143.500H191" stroke="#1c3a4a" stroke-width="1.500"/>
<path d="M94 175c3 3 8 7 8 11 0 4-4 7-8 7s-8-3-8-7c0-4 5-8 8-11z" fill="#4d5a66"/>
<text x="104" y="183" font-size="9" class="b" fill="#4d5a66" textLength="27" lengthAdjust="spacingAndGlyphs">YOUR</text>
<text x="104" y="193" font-size="9" class="b" fill="#4d5a66" textLength="27" lengthAdjust="spacingAndGlyphs">LOGO</text>
</g></svg>

<!-- T10 Lesson Overview -->
<svg x="549.300" y="560" width="214.700" height="121" viewBox="0 0 214.700 121"><g filter="url(#s)">
<rect width="215" height="121" fill="#fff"/>
<path d="M0 0h12L0 12zM55 0l37 15L125 0" fill="none" stroke="#e3e3e3" stroke-width="3" stroke-dasharray="7 4"/>
<path d="M0 2L12 0 14 8 0 18z" fill="#eee"/>
<path d="M12 75L38 62 55 120H25Z" fill="#e2e2e2"/>
<circle cx="102" cy="92" r="16" fill="#eee"/>
<text x="19.400" y="43" font-size="20" fill="#2ea7c8" font-weight="700" textLength="110" lengthAdjust="spacingAndGlyphs">Lesson name</text>
<text x="47" y="57" font-size="9" fill="#333" textLength="82" lengthAdjust="spacingAndGlyphs">12th September 2022</text>
<path d="M0 67L48 112 40 121H25L0 92Z" fill="#2ea7c8" stroke="#0d3040" stroke-width=".8"/>
<path d="M5 74l-4 5M12 81l-4 5M19 88l-4 5M26 95l-4 5M33 102l-4 5" stroke="#0d3040" stroke-width=".7"/>
<path d="M55 70l6-4 7 25-4 6-6-4z" fill="#2ea7c8" stroke="#0d3040" stroke-width=".8"/>
<path d="M47 90C55 85 60 92 62 100 66 108 64 116 60 121H45Z" fill="#8a5232"/>
<path d="M73 82L95 75 116 115 108 121H88Z" fill="#fff" stroke="#222"/>
<path d="M82 89l10-3M87 100l11-4M92 110l11-4" stroke="#222" stroke-width="1.200"/>
<path d="M128 84h10v6c4 4 4 10 3 16l-2 15h-12l-2-15c0-6 0-12 3-16z" fill="#cfe9f2" stroke="#222"/><rect x="129" y="81" width="8" height="4" fill="#2ea7c8" stroke="#222" stroke-width=".6"/>
<path d="M155 121L165 72H215V121Z" fill="#fff" stroke="#222"/>
<path d="M163 85H215V121H158Z" fill="#6fc3dc"/>
<path d="M145 112L160 103 215 112V121H145Z" fill="#d9d9d9" stroke="#222" stroke-width=".8"/>
<circle cx="168" cy="19" r="11" fill="#fff" stroke="#222"/>
<path d="M163 28l-2 12M172 29l3 10M164 40C168 46 174 46 178 39" stroke="#222" fill="none"/>
<path d="M168 28C170 36 168 50 166 60" stroke="#2ea7c8" stroke-width="2" fill="none"/>
<rect x="172" y="21" width="50" height="75" rx="7" fill="#fff"/>
<use href="#bldg" x="187" y="26"/>
<text x="182" y="57" class="pl" textLength="27" lengthAdjust="spacingAndGlyphs">Multi-scene</text>
<use href="#film" x="187" y="63"/>
<text x="179" y="88" class="pl" textLength="32" lengthAdjust="spacingAndGlyphs">Video friendly</text>
</g></svg>

<!-- titles -->
<text x="80" y="493" class="ttl" textLength="134" lengthAdjust="spacingAndGlyphs">Learning Objectives</text>
<text x="314.700" y="493" class="ttl" textLength="184.500" lengthAdjust="spacingAndGlyphs">New Employee Onboarding</text>
<text x="549.300" y="493" class="ttl" textLength="209" lengthAdjust="spacingAndGlyphs">Sharing Success Whiteboard ...</text>
<text x="784" y="493" class="ttl" textLength="205" lengthAdjust="spacingAndGlyphs">New Product/Feature/Servic...</text>
<text x="1018.700" y="493" class="ttl" textLength="178" lengthAdjust="spacingAndGlyphs">The Water Cycle Explainer</text>
<text x="1253.300" y="493" class="ttl" textLength="211" lengthAdjust="spacingAndGlyphs">Whiteboard - Explainer Collage</text>
<text x="1488" y="493" class="ttl" textLength="205" lengthAdjust="spacingAndGlyphs">Whiteboard Explainer - Gree...</text>
<text x="80" y="743" class="ttl" textLength="67" lengthAdjust="spacingAndGlyphs">Mind Map</text>
<text x="314.700" y="743" class="ttl" textLength="70.300" lengthAdjust="spacingAndGlyphs">Your Story</text>
<text x="549.300" y="743" class="ttl" textLength="113.700" lengthAdjust="spacingAndGlyphs">Lesson Overview</text>

<!-- scrollbar -->
<rect x="1783" width="17" height="800" fill="#f1f1f1"/>
<rect x="1785" y="17" width="13" height="720" fill="#c1c1c1"/>
<path d="M1788 11l3.500-4 3.500 4z" fill="#a3a3a3"/>
<path d="M1788 789h7l-3.500 4z" fill="#505050"/>
</svg>
</body>
</html>
